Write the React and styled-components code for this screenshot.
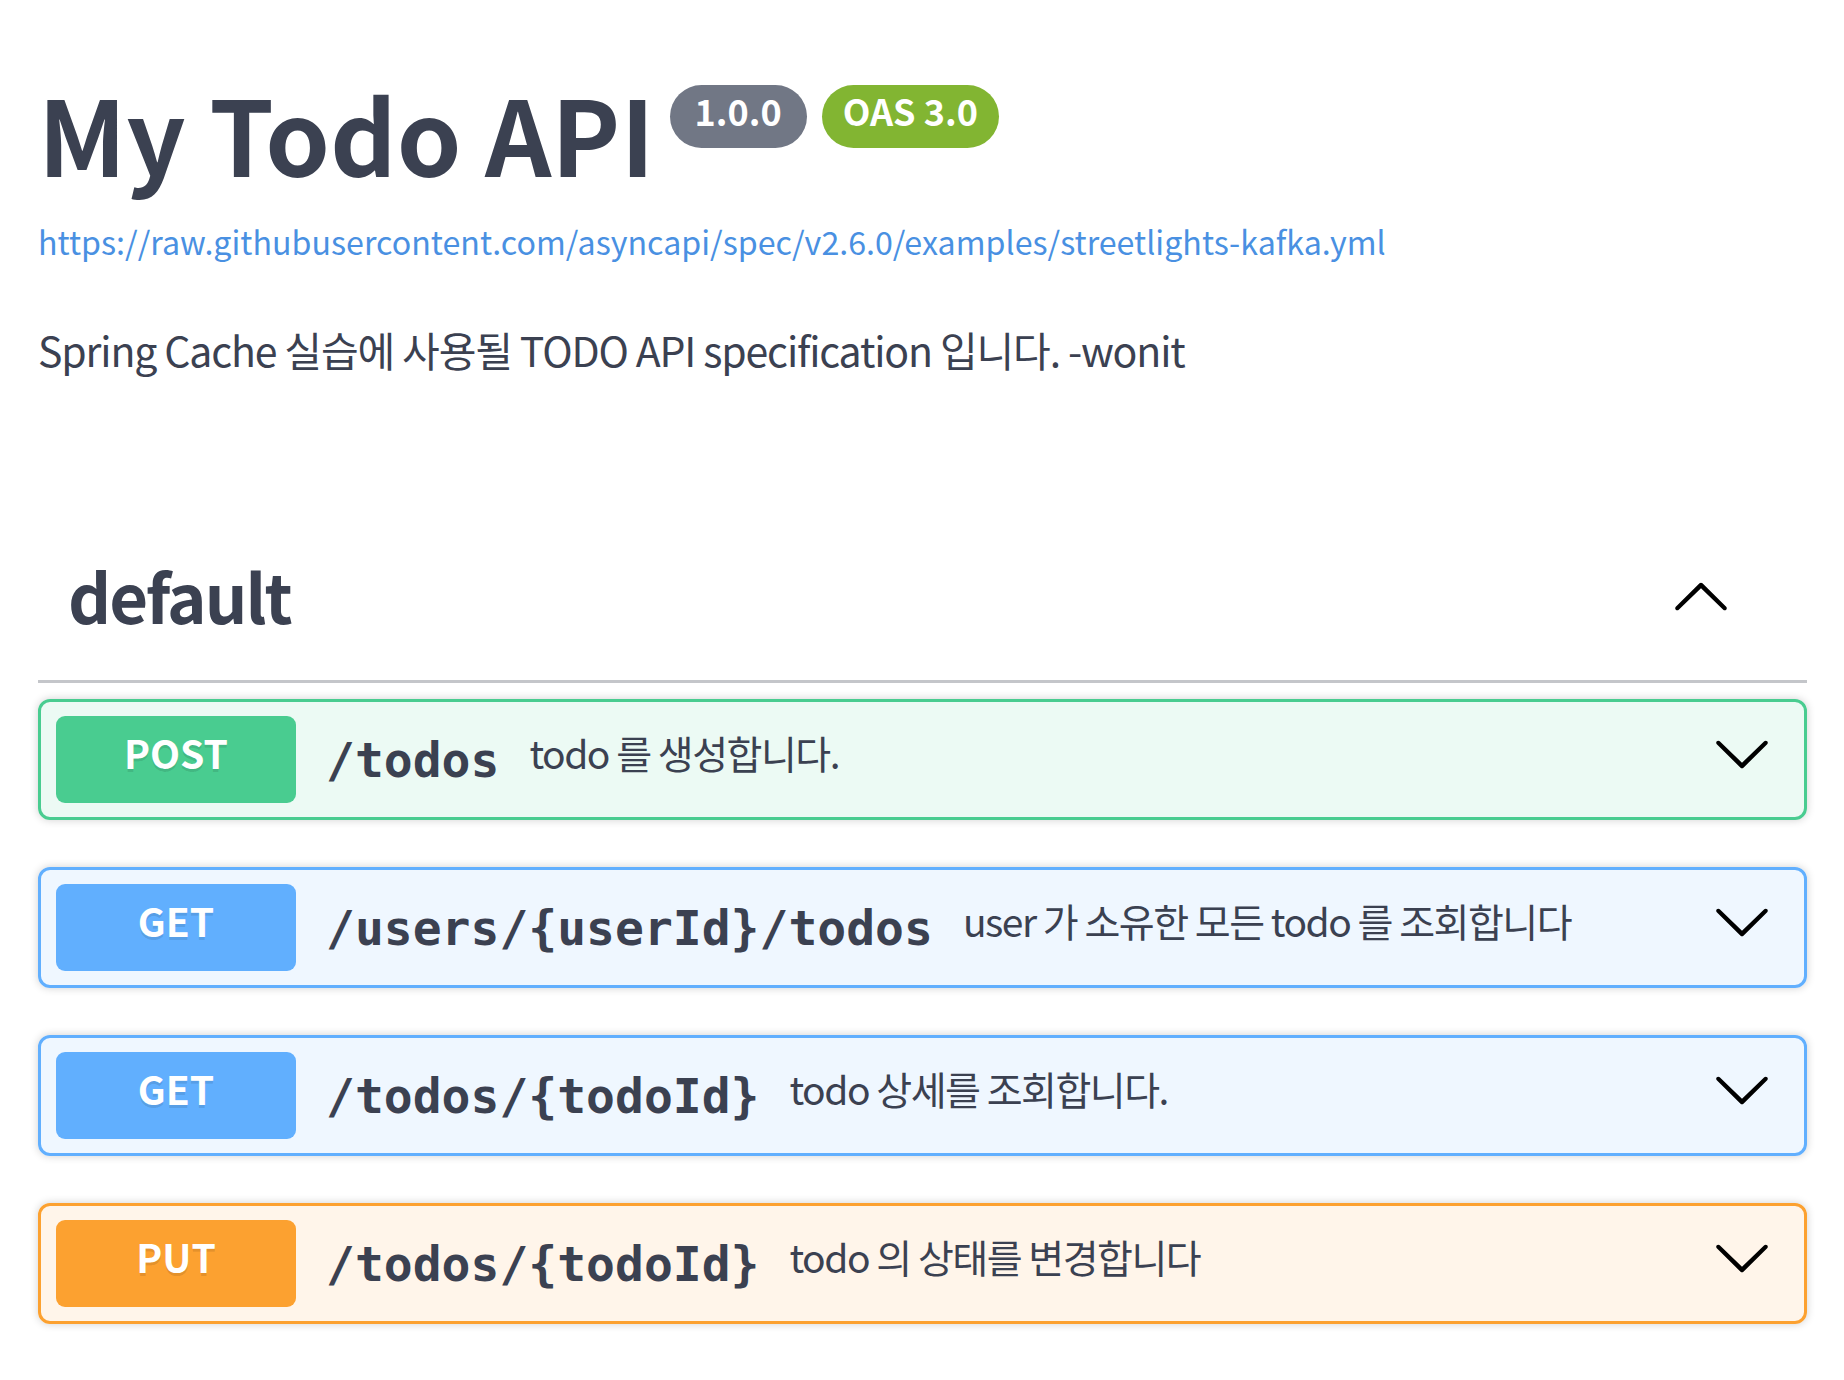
import React from "react";
import styled, { createGlobalStyle } from "styled-components";

const GlobalStyle = createGlobalStyle`
  html, body { margin: 0; padding: 0; background: #ffffff; }
  body { font-family: "Noto Sans CJK KR", "Noto Sans", sans-serif; color: #3b4151; }
  * { box-sizing: border-box; }
`;

const Page = styled.div`
  padding: 71px 37px 56px 38px;
  width: 1844px;
`;

const Info = styled.section`
  display: flex;
  flex-direction: column;
`;

const TitleRow = styled.div`
  display: flex;
  align-items: flex-start;
`;

const Title = styled.h2`
  margin: 0;
  font-size: 103.5px;
  line-height: 123px;
  font-weight: 700;
  color: #3b4151;
`;

const Pills = styled.div`
  display: flex;
  gap: 15px;
  margin: 14px 0 0 15px;
`;

const Pill = styled.span`
  display: inline-block;
  height: 63px;
  line-height: 50px;
  padding: 0 ${(p) => p.$px}px;
  border-radius: 32px;
  font-size: 36px;
  font-weight: 700;
  color: #ffffff;
  background: ${(p) => p.$bg};
`;

const BaseLink = styled.a`
  display: block;
  margin-top: 22px;
  font-size: 32.2px;
  line-height: 50px;
  color: #4990e2;
  text-decoration: none;
`;

const Description = styled.p`
  margin: 53px 0 0;
  font-size: 41px;
  line-height: 60px;
  letter-spacing: -1.15px;
  color: #3b4151;
`;

const TagSection = styled.section`
  margin-top: 134px;
`;

const TagHeader = styled.div`
  display: flex;
  align-items: flex-start;
  justify-content: space-between;
  padding: 32px 76px 35px 30px;
  border-bottom: 3px solid rgba(59, 65, 81, 0.3);
`;

const TagTitle = styled.h3`
  margin: 0;
  font-size: 67px;
  line-height: 100px;
  letter-spacing: -2px;
  font-weight: 700;
  color: #3b4151;
`;

const Chevron = styled.svg`
  width: 60px;
  height: 60px;
  flex: 0 0 60px;
  margin-top: ${(p) => p.$mt || 0}px;
  margin-right: ${(p) => p.$mr || 0}px;
  margin-bottom: ${(p) => p.$mb || 0}px;
`;

const OpList = styled.div`
  display: flex;
  flex-direction: column;
  gap: 47px;
  margin-top: 16px;
`;

const OpBlock = styled.div`
  border: 3px solid ${(p) => p.$color};
  border-radius: 12px;
  background: ${(p) => p.$bg};
  box-shadow: 0 0 9px rgba(0, 0, 0, 0.19);
`;

const Summary = styled.div`
  display: flex;
  align-items: center;
  padding: 14px 15px;
`;

const Method = styled.span`
  flex: 0 0 240px;
  width: 240px;
  height: 87px;
  line-height: 73px;
  padding-bottom: 14px;
  border-radius: 9px;
  background: ${(p) => p.$color};
  color: #ffffff;
  font-size: 39px;
  font-weight: 700;
  text-align: center;
  text-shadow: 0 3px 0 rgba(0, 0, 0, 0.1);
`;

const Path = styled.span`
  padding: 0 30px;
  font-family: "DejaVu Sans Mono", monospace;
  font-size: 48px;
  font-weight: 700;
  color: #3b4151;
  white-space: nowrap;
`;

const OpDesc = styled.span`
  flex: 1 1 auto;
  padding-bottom: 15px;
  font-size: 39px;
  letter-spacing: -1.5px;
  color: #3b4151;
  white-space: nowrap;
`;

const ArrowDown = (props) => (
  <Chevron viewBox="0 0 20 20" {...props}>
    <path
      fill="#000"
      d="M17.418 6.109c.272-.268.709-.268.979 0s.271.701 0 .969l-7.908 7.83c-.27.268-.707.268-.979 0l-7.908-7.83c-.27-.268-.27-.701 0-.969.271-.268.709-.268.979 0L10 13.25l7.418-7.141z"
    />
  </Chevron>
);

const ArrowUp = (props) => (
  <Chevron viewBox="0 0 20 20" {...props}>
    <path
      fill="#000"
      d="M2.582 13.891c-.272.268-.709.268-.979 0s-.271-.701 0-.969l7.908-7.83c.27-.268.707-.268.979 0l7.908 7.83c.27.268.27.701 0 .969-.271.268-.709.268-.979 0L10 6.75l-7.418 7.141z"
    />
  </Chevron>
);

const METHODS = {
  POST: { color: "#49cc90", bg: "rgba(73, 204, 144, 0.1)" },
  GET: { color: "#61affe", bg: "rgba(97, 175, 254, 0.1)" },
  PUT: { color: "#fca130", bg: "rgba(252, 161, 48, 0.1)" },
};

const ops = [
  { method: "POST", path: "/todos", desc: "todo 를 생성합니다." },
  { method: "GET", path: "/users/{userId}/todos", desc: "user 가 소유한 모든 todo 를 조회합니다" },
  { method: "GET", path: "/todos/{todoId}", desc: "todo 상세를 조회합니다." },
  { method: "PUT", path: "/todos/{todoId}", desc: "todo 의 상태를 변경합니다" },
];

export default function App() {
  return (
    <>
      <GlobalStyle />
      <Page>
        <Info>
          <TitleRow>
            <Title>My Todo API</Title>
            <Pills>
              <Pill $bg="#717785" $px={25}>1.0.0</Pill>
              <Pill $bg="#82b532" $px={21}>OAS 3.0</Pill>
            </Pills>
          </TitleRow>
          <BaseLink href="#">
            https://raw.githubusercontent.com/asyncapi/spec/v2.6.0/examples/streetlights-kafka.yml
          </BaseLink>
          <Description>Spring Cache 실습에 사용될 TODO API specification 입니다. -wonit</Description>
        </Info>
        <TagSection>
          <TagHeader>
            <TagTitle>default</TagTitle>
            <ArrowUp $mt={23} />
          </TagHeader>
          <OpList>
            {ops.map((op, i) => {
              const m = METHODS[op.method];
              return (
                <OpBlock key={i} $color={m.color} $bg={m.bg}>
                  <Summary>
                    <Method $color={m.color}>{op.method}</Method>
                    <Path>{op.path}</Path>
                    <OpDesc>{op.desc}</OpDesc>
                    <ArrowDown $mr={17} $mb={14} />
                  </Summary>
                </OpBlock>
              );
            })}
          </OpList>
        </TagSection>
      </Page>
    </>
  );
}
